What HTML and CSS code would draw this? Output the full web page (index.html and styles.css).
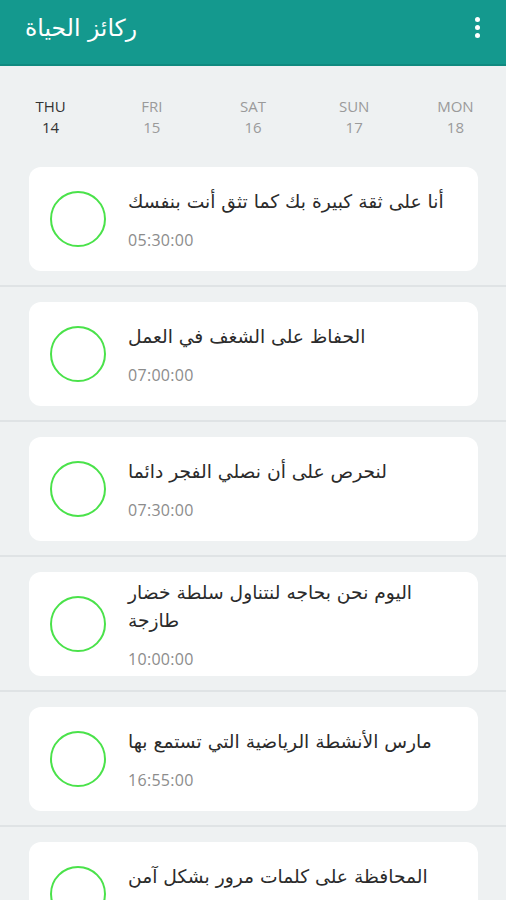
FILE: index.html
```html
<!DOCTYPE html>
<html lang="ar">
  <head>
    <meta charset="UTF-8" />
    <meta name="viewport" content="width=device-width, initial-scale=1.0" />
    <title>ركائز الحياة</title>
    <link rel="stylesheet" href="styles.css">
  </head>
  <body>
    <div class="appbar">
      <span class="appbar-title">ركائز الحياة</span>
      <span class="menu-dots"><i></i><i></i><i></i></span>
    </div>

    <div class="days">
      <div class="day active"><span>THU</span><span>14</span></div>
      <div class="day"><span>FRI</span><span>15</span></div>
      <div class="day"><span>SAT</span><span>16</span></div>
      <div class="day"><span>SUN</span><span>17</span></div>
      <div class="day"><span>MON</span><span>18</span></div>
    </div>

    <div class="habit-list">
      <div class="habit-row">
        <div class="habit-card">
          <div class="check"></div>
          <div class="habit-text">
            <p class="habit-title">أنا على ثقة كبيرة بك كما تثق أنت بنفسك</p>
            <p class="habit-time">05:30:00</p>
          </div>
        </div>
      </div>
      <div class="habit-row">
        <div class="habit-card">
          <div class="check"></div>
          <div class="habit-text">
            <p class="habit-title">الحفاظ على الشغف في العمل</p>
            <p class="habit-time">07:00:00</p>
          </div>
        </div>
      </div>
      <div class="habit-row">
        <div class="habit-card">
          <div class="check"></div>
          <div class="habit-text">
            <p class="habit-title">لنحرص على أن نصلي الفجر دائما</p>
            <p class="habit-time">07:30:00</p>
          </div>
        </div>
      </div>
      <div class="habit-row">
        <div class="habit-card">
          <div class="check"></div>
          <div class="habit-text">
            <p class="habit-title">اليوم نحن بحاجه لنتناول سلطة خضار طازجة</p>
            <p class="habit-time">10:00:00</p>
          </div>
        </div>
      </div>
      <div class="habit-row">
        <div class="habit-card">
          <div class="check"></div>
          <div class="habit-text">
            <p class="habit-title">مارس الأنشطة الرياضية التي تستمع بها</p>
            <p class="habit-time">16:55:00</p>
          </div>
        </div>
      </div>
      <div class="habit-row">
        <div class="habit-card">
          <div class="check"></div>
          <div class="habit-text">
            <p class="habit-title">المحافظة على كلمات مرور بشكل آمن</p>
            <p class="habit-time">08:00:00</p>
          </div>
        </div>
      </div>
    </div>
  </body>
</html>
```

FILE: styles.css
```css
body {
  margin: 0;
  background-color: #eef1f2;
  font-family: "Open Sans", "DejaVu Sans", sans-serif;
  direction: ltr;
}

.appbar {
  height: 64px;
  background-color: #14998e;
  border-bottom: 2px solid #108a80;
  display: flex;
  align-items: center;
  justify-content: space-between;
  padding: 0 26px 0 25px;
}

.appbar-title {
  color: #fff;
  font-family: "DejaVu Sans", sans-serif;
  font-size: 23.5px;
  margin-top: -8px;
}

.menu-dots {
  display: flex;
  flex-direction: column;
  gap: 3px;
  margin-top: -10px;
}

.menu-dots i {
  width: 5px;
  height: 5px;
  border-radius: 50%;
  background-color: #fff;
}

.days {
  display: grid;
  grid-template-columns: repeat(5, 1fr);
  padding: 30px 0 14px;
}

.day {
  display: flex;
  flex-direction: column;
  align-items: center;
  color: #9a9a9a;
  font-size: 15px;
  line-height: 21px;
}

.day.active {
  color: #333;
}

.habit-row {
  padding: 15px 28px 14px 29px;
  border-bottom: 2px solid #dfe3e5;
}

.habit-card {
  height: 104px;
  background-color: #fff;
  border-radius: 12px;
  display: flex;
  align-items: center;
  padding: 0 20px 0 21px;
}

.check {
  flex: none;
  width: 52px;
  height: 52px;
  border: 2px solid #4ae24a;
  border-radius: 50%;
  margin-right: 22px;
}

.habit-text {
  flex: 1;
  min-width: 0;
}

.habit-text p {
  margin: 0;
}

.habit-title {
  font-family: "DejaVu Sans", sans-serif;
  font-size: 18.7px;
  line-height: 28px;
  color: #2b2b2b;
}

.habit-time {
  margin-top: 14px !important;
  font-size: 16px;
  line-height: 20px;
  letter-spacing: 0.3px;
  color: #8c8c8c;
}
```
